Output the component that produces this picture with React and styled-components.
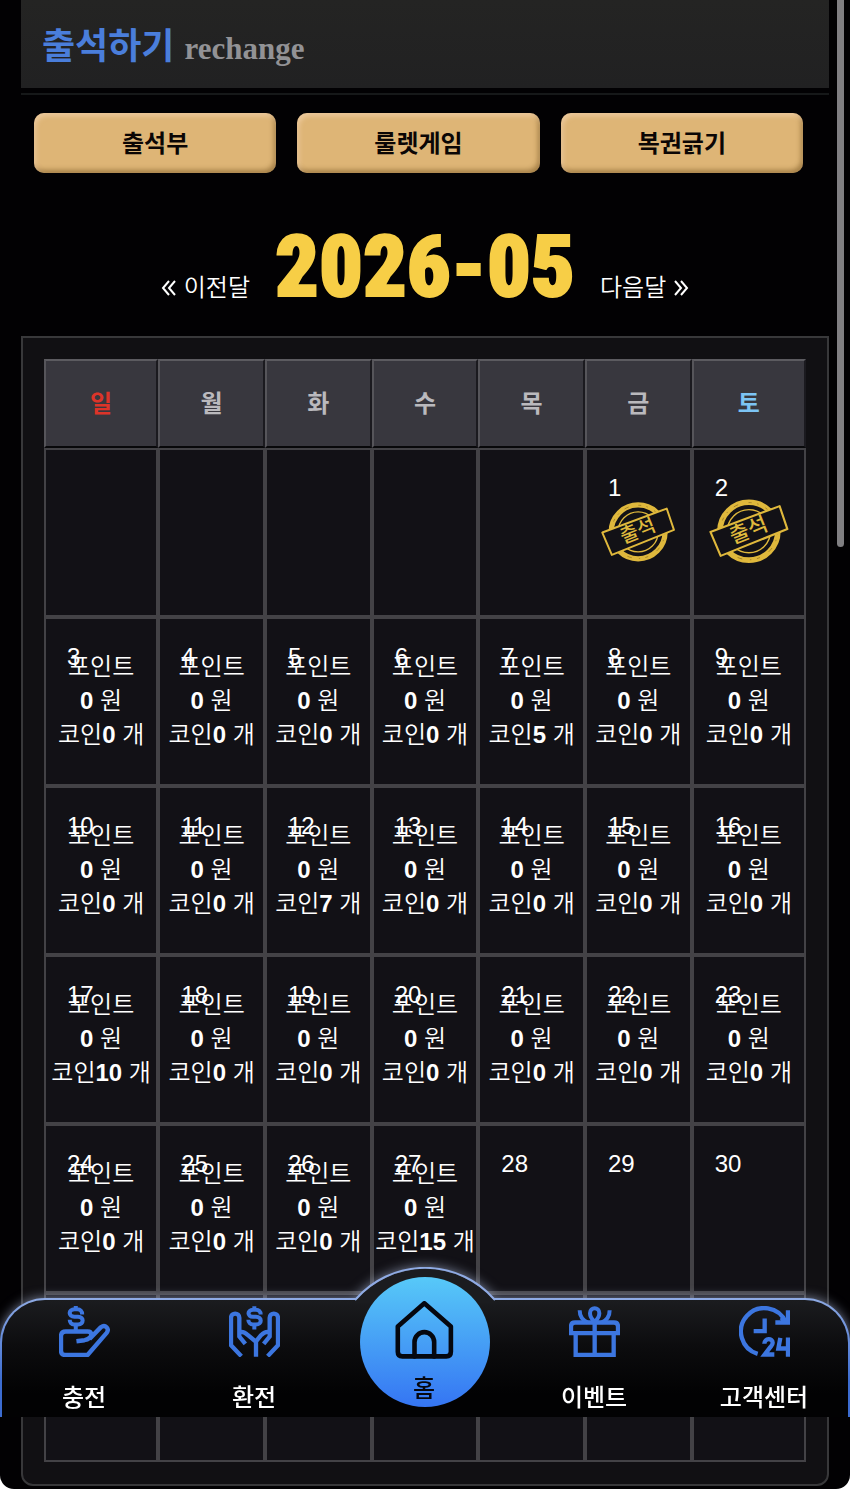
import React from "react";
import styled, { createGlobalStyle } from "styled-components";

const sans = `"Liberation Sans", "Noto Sans CJK KR", sans-serif`;

const GlobalStyle = createGlobalStyle`
  *, *::before, *::after { box-sizing: border-box; }
  html { background: #fff; scrollbar-width: none; }
  body { margin: 0; font-family: ${sans}; font-size: 24px; color: #fff; }
  a { color: inherit; text-decoration: none; }
`;

const Page = styled.div`
  min-height: 100vh;
  padding: 0 21px 2px;
  background: #020103;
  border-radius: 0 0 14px 14px;
`;

const Header = styled.header`
  display: flex;
  align-items: baseline;
  gap: 10px;
  height: 88px;
  padding: 20px 21px 0;
  background: linear-gradient(#242423, #212122);
`;

const Title = styled.h1`
  margin: 0;
  font-size: 36px;
  line-height: 54px;
  font-weight: 700;
  color: #4a7edb;
`;

const Subtitle = styled.span`
  font-family: "Liberation Serif", serif;
  font-size: 31px;
  font-weight: 700;
  color: #929295;
`;

const Divider = styled.hr`
  height: 2px;
  margin: 5px 0 18px;
  border: 0;
  background: #161819;
`;

const Tabs = styled.div`
  display: grid;
  grid-template-columns: repeat(3, 1fr);
  gap: 21px;
  padding: 0 26px 0 13px;
`;

const TabButton = styled.button`
  height: 60px;
  padding: 0 0 4px;
  border: 0;
  border-radius: 10px;
  background: #deb576;
  color: #0b0605;
  font-family: ${sans};
  font-size: 24px;
  font-weight: 700;
  box-shadow: inset 2px 3px 5px rgba(255, 225, 200, 0.5),
    inset -2px -3px 5px rgba(90, 60, 10, 0.45);
`;

const MonthBar = styled.div`
  display: flex;
  justify-content: center;
  align-items: baseline;
  gap: 25px;
  height: 163px;
  padding-top: 39px;
`;

const Month = styled.strong`
  font-family: Impact, "Roboto Condensed", "Noto Sans ExtraCondensed", "Liberation Sans Narrow",
    "Open Sans Condensed", "Liberation Sans", sans-serif;
  font-size: 86px;
  line-height: 110px;
  font-weight: 900;
  color: #f7ce46;
  -webkit-text-stroke: 2px #f7ce46;
`;

const MonthLink = styled.a`
  display: flex;
  align-items: center;
  gap: 8px;
  font-weight: 350;
  line-height: 36px;
`;

const Panel = styled.section`
  padding: 21px 21px 22px;
  border: 2px solid #38383a;
  border-radius: 0 0 12px 12px;
  background: #111013;
`;

const Calendar = styled.table`
  width: 100%;
  table-layout: fixed;
  border-collapse: separate;
  border-spacing: 0;
`;

const Weekday = styled.th`
  width: ${(p) => (p.$edge ? "15%" : "14%")};
  height: 89px;
  padding: 0 0 4px;
  border: 2px solid;
  border-color: #5c5b60 #1b1a1f #08080a #56555a;
  background: #38373e;
  color: ${(p) => p.$color || "#bab9bd"};
  font-weight: 700;
`;

const DayCell = styled.td`
  position: relative;
  height: 169px;
  padding: 0 0 2px;
  border: 2px solid #434246;
  background: #121116;
  text-align: center;
  vertical-align: middle;
  font-weight: 350;
  line-height: 34px;
  white-space: nowrap;
`;

const DayNumber = styled.span`
  position: absolute;
  top: 21px;
  left: 21px;
`;

const Reward = styled.div`
  b { font-weight: 700; }
`;

const StampArt = styled.svg`
  display: block;
  width: 72%;
  margin: 0 auto;
`;

const ScrollThumb = styled.div`
  position: fixed;
  top: 0;
  right: 6px;
  width: 7px;
  height: 547px;
  border-radius: 0 0 4px 4px;
  background: #807f82;
`;

const Dock = styled.nav`
  position: fixed;
  left: 0;
  right: 0;
  bottom: 72px;
  height: 119px;
  clip-path: inset(-60px 0 0 0);
`;

const DockShape = styled.div`
  position: absolute;
  inset: 0;
  filter: drop-shadow(0 0 6px rgba(190, 205, 240, 0.6));
`;

const DockBar = styled.div`
  height: 100%;
  border: 2px solid transparent;
  border-bottom: 0;
  border-radius: 45px 45px 0 0;
  background: linear-gradient(#1b1c1f, #0c0c0e 40%, #020203 80%) padding-box,
    linear-gradient(#8fabe4, #3c6cd0 70%) border-box;
`;

const DockBump = styled.svg`
  position: absolute;
  top: -31px;
  left: calc(50% - 71px);
`;

const DockItems = styled.div`
  position: relative;
  display: grid;
  grid-template-columns: repeat(5, 1fr);
  height: 100%;
`;

const DockLink = styled.a`
  display: flex;
  flex-direction: column;
  align-items: center;
  justify-content: space-between;
  padding: 8px 2px 1px 0;
  font-weight: 500;
  line-height: 36px;
  svg { color: #3c76e0; }
`;

const HomeLink = styled.a`
  display: flex;
  flex-direction: column;
  align-items: center;
  justify-self: center;
  gap: 12px;
  width: 130px;
  height: 130px;
  margin-top: -21px;
  padding: 24px 2px 0 0;
  border-radius: 50%;
  background: linear-gradient(#57c9f8, #3575f3);
  color: #05070f;
  font-weight: 500;
  line-height: 36px;
`;

function Icon({ box, size = 51, stroke = 13, round, children }) {
  return (
    <svg
      width={size}
      height={size}
      viewBox={box}
      fill="none"
      stroke="currentColor"
      strokeWidth={stroke}
      strokeLinecap={round ? "round" : "butt"}
      strokeLinejoin={round ? "round" : "miter"}
      aria-hidden="true"
    >
      {children}
    </svg>
  );
}

const DepositIcon = () => (
  <Icon box="178 138 152 152">
    <path d="M247 163c0-9-6-15-14-15h-9c-19 0-19 22 0 22h11c18 0 18 23 0 23h-12c-8 0-13-6-13-14M228 138v12M228 190v22" strokeWidth="12" />
    <path d="M230 243l24-3c12-2 20-10 20-17s-5-9-11-9H198c-10 0-14 5-14 14v43c0 8 4 13 13 13h66l57-66c9-12-4-27-17-17l-34 35" strokeLinejoin="round" />
  </Icon>
);

const WithdrawIcon = () => (
  <Icon box="687 138 153 152">
    <path d="M782 163c0-9-6-14-14-14h-9c-18 0-18 21 0 21h9c19 0 19 23 0 23h-9c-8 0-14-6-14-14M763 138v12M763 190v18" strokeWidth="12" />
    <path d="M724 288l-31-33V173c0-17 25-17 25 0v56l18 22" />
    <path d="M803 288l31-33V173c0-17-25-17-25 0v56l-18 22" />
    <path d="M718 216c12-4 19 2 26 9l24 20v45M809 216c-12-4-19 2-26 9l-16 20" />
  </Icon>
);

const GiftIcon = () => (
  <Icon box="58 138 153 152">
    <path d="M64 224v-25c0-8 4-12 12-12h117c8 0 12 4 12 12v25M58 219h153M78 219v65h114v-65M135 184v100" />
    <path d="M135 185c-12-11-14-19-14-26 0-20 28-20 28 0 0 7-2 15-14 26zM90 150c0 19 9 30 24 37M180 150c0 19-9 30-24 37" strokeWidth="12" />
  </Icon>
);

const SupportIcon = () => (
  <Icon box="568 138 153 152">
    <path d="M624 281a70 70 0 1 1 84-95" />
    <path d="M715 150v37h-38M694 172l19 14" />
    <path d="M645 175v38h-33" />
    <path d="M644 251c0-18 25-18 25-3 0 6-4 9-7 13l-17 22h29M692 233l-6 32h30M715 232v58" />
  </Icon>
);

const HomeIcon = () => (
  <Icon box="195 153 177 177" size={59} stroke={14} round>
    <path d="M283 160l81 71v77q0 14-14 14H216q-14 0-14-14V231z" />
    <path d="M253 322v-44a30 30 0 0 1 60 0v44" />
  </Icon>
);

const Chevrons = ({ flip }) => (
  <svg width="15" height="16" viewBox="0 0 15 16" fill="none" stroke="currentColor" strokeWidth="2" aria-hidden="true">
    <path d={flip ? "M1 1l6 7-6 7M7 1l6 7-6 7" : "M8 1L2 8l6 7M14 1L8 8l6 7"} />
  </svg>
);

const Stamp = () => (
  <StampArt viewBox="32 94 225 188" role="img" aria-label="출석">
    <g fill="none" stroke="#dfb83c">
      <circle cx="145" cy="188" r="82" strokeWidth="16" />
      <circle cx="145" cy="188" r="81" stroke="#8a6c1e" strokeWidth="2" strokeDasharray="9 16 4 22 14 30" />
      <circle cx="145" cy="188" r="61" strokeWidth="4" />
      <path d="M36 190L232 117l22 65L65 258z" fill="#121116" strokeWidth="6" strokeLinejoin="round" />
    </g>
    <text
      x="145"
      y="205"
      transform="rotate(-22 145 187)"
      textAnchor="middle"
      fontSize="60"
      fontWeight="500"
      fill="#dfb83c"
    >
      출석
    </text>
  </StampArt>
);

const weekdays = [
  ["일", "#dc3429"],
  ["월"],
  ["화"],
  ["수"],
  ["목"],
  ["금"],
  ["토", "#7cc4f4"],
];

const coins = { 7: 5, 12: 7, 17: 10, 27: 15 };
const firstWeekday = 5;
const attended = [1, 2];
const today = 27;

const weeks = Array.from({ length: 6 }, (_, w) =>
  Array.from({ length: 7 }, (_, d) => {
    const day = w * 7 + d - firstWeekday + 1;
    return day >= 1 && day <= 31 ? day : null;
  })
);

function Day({ day }) {
  if (!day) return <DayCell />;
  return (
    <DayCell>
      <DayNumber>{day}</DayNumber>
      {attended.includes(day) && <Stamp />}
      {!attended.includes(day) && day <= today && (
        <Reward>
          포인트
          <br />
          <b>0</b> 원
          <br />
          코인<b>{coins[day] || 0}</b> 개
        </Reward>
      )}
    </DayCell>
  );
}

export default function App() {
  return (
    <>
      <GlobalStyle />
      <Page>
        <Header>
          <Title>출석하기</Title>
          <Subtitle>rechange</Subtitle>
        </Header>
        <Divider />
        <Tabs>
          <TabButton type="button">출석부</TabButton>
          <TabButton type="button">룰렛게임</TabButton>
          <TabButton type="button">복권긁기</TabButton>
        </Tabs>
        <MonthBar>
          <MonthLink href="#prev"><Chevrons />이전달</MonthLink>
          <Month>2026-05</Month>
          <MonthLink href="#next">다음달<Chevrons flip /></MonthLink>
        </MonthBar>
        <Panel>
          <Calendar>
            <thead>
              <tr>
                {weekdays.map(([name, color], i) => (
                  <Weekday key={name} scope="col" $color={color} $edge={i % 6 === 0}>
                    {name}
                  </Weekday>
                ))}
              </tr>
            </thead>
            <tbody>
              {weeks.map((week, w) => (
                <tr key={w}>
                  {week.map((day, d) => <Day key={d} day={day} />)}
                </tr>
              ))}
            </tbody>
          </Calendar>
        </Panel>
      </Page>
      <ScrollThumb />
      <Dock>
        <DockShape>
          <DockBar />
          <DockBump width="142" height="36" viewBox="0 0 142 36" aria-hidden="true">
            <path d="M2 33A92 92 0 0 1 140 33V36H2z" fill="#1b1c1f" />
            <path d="M1 33L2 32A92 92 0 0 1 140 32L141 33" fill="none" stroke="#8fabe4" strokeWidth="2" />
          </DockBump>
        </DockShape>
        <DockItems>
          <DockLink href="#deposit"><DepositIcon />충전</DockLink>
          <DockLink href="#withdraw"><WithdrawIcon />환전</DockLink>
          <HomeLink href="#home"><HomeIcon />홈</HomeLink>
          <DockLink href="#event"><GiftIcon />이벤트</DockLink>
          <DockLink href="#support"><SupportIcon />고객센터</DockLink>
        </DockItems>
      </Dock>
    </>
  );
}
